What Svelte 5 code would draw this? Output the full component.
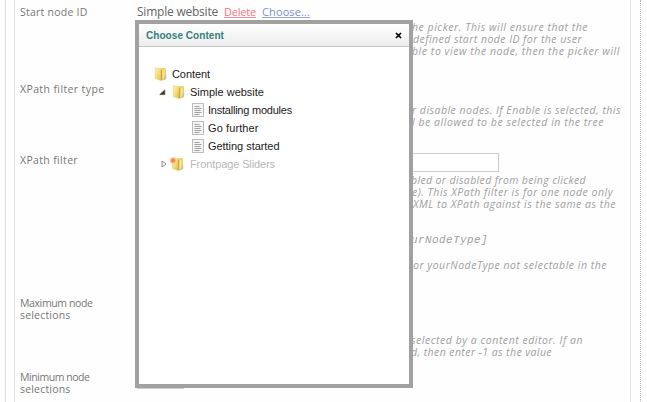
<script>
  // Spreads the letters of a line so that it fills the given width.
  function fit(node, width) {
    const natural = node.getBoundingClientRect().width;
    const count = node.textContent.length;
    node.style.letterSpacing = `${(width - natural) / count}px`;
  }

  // Each help line: text, indent from the help column, width, optional style.
  const rows = [
    {
      height: 77,
      label: [['Start node ID', 67.5]],
      picker: true,
      help: [
        ['he picker. This will ensure that the', 1, 176],
        ['defined start node ID for the user', 2, 169],
        ['ble to view the node, then the picker will', 1, 208]
      ]
    },
    {
      height: 71,
      label: [['XPath filter type', 84.5]],
      offset: 21,
      help: [
        ['r disable nodes. If Enable is selected, this', 1, 209],
        ['l be allowed to be selected in the tree', 1, 192]
      ]
    },
    {
      height: 143,
      label: [['XPath filter', 58]],
      input: true,
      help: [
        ['bled or disabled from being clicked', 0, 175],
        ['e). This XPath filter is for one node only', 1, 201],
        ['XML to XPath against is the same as the', 2, 203],
        null,
        null,
        ['urNodeType]', 0, 77, 'code'],
        null,
        ['or yourNodeType not selectable in the', 2, 194, 'low']
      ]
    },
    {
      height: 74,
      label: [['Maximum node', 72.5], ['selections', 50.5]],
      offset: 37,
      help: [
        ['selected by a content editor. If an', 0, 172],
        ['d, then enter -1 as the value', 0, 141]
      ]
    },
    {
      height: 31,
      label: [['Minimum node', 69.5], ['selections', 50.5]],
      small: true,
      help: []
    }
  ];

  const nodes = [
    { text: 'Content', width: 38, level: 0, icon: 'folder' },
    { text: 'Simple website', width: 74, level: 1, icon: 'folder', arrow: 'open' },
    { text: 'Installing modules', width: 84, level: 2, icon: 'doc' },
    { text: 'Go further', width: 50.5, level: 2, icon: 'doc' },
    { text: 'Getting started', width: 71.5, level: 2, icon: 'doc' },
    { text: 'Frontpage Sliders', width: 85, level: 1, icon: 'folder', arrow: 'closed', dim: true }
  ];
</script>

<div class="page">
  <div class="outer">
    <div class="panel">
      {#each rows as row}
        <div class="row" style:height="{row.height}px">
          <div class="label">
            {#each row.label as [text, width]}
              <div class="line"><span use:fit={width}>{text}</span></div>
            {/each}
          </div>
          <div class="field">
            {#if row.picker}
              <div class="picked">
                <span use:fit={81}>Simple website</span>
                <a class="delete" href="#delete"><span use:fit={32}>Delete</span></a>
                <a href="#choose"><span use:fit={48}>Choose...</span></a>
              </div>
            {/if}
            {#if row.input}<div class="input"></div>{/if}
            {#if row.small}<div class="input small"></div>{/if}
            <div class="help" style:padding-top="{row.offset ?? 0}px">
              {#each row.help as line}
                <div class="line {line?.[3] ?? ''}">
                  {#if line}
                    <span style:margin-left="{line[1]}px" use:fit={line[2]}>{line[0]}</span>
                  {/if}
                </div>
              {/each}
            </div>
          </div>
        </div>
      {/each}
    </div>
  </div>

  <div class="dialog">
    <div class="head">
      <span use:fit={78}>Choose Content</span>
      <svg width="7" height="7" viewBox="0 0 7 7"><path d="M1 1L6 6M6 1L1 6" stroke="#000" stroke-width="1.7" /></svg>
    </div>
    <div class="tree">
      {#each nodes as n}
        <div class="node" class:dim={n.dim} style:padding-left="{n.level * 18}px">
          <div class="arrow">
            {#if n.arrow === 'open'}
              <svg width="7" height="7" viewBox="0 0 7 7"><path d="M5.8 .9V5.6H.8Z" fill="#333" stroke="#555" stroke-width=".8" /></svg>
            {:else if n.arrow === 'closed'}
              <svg class="shut" width="6" height="8" viewBox="0 0 6 8"><path d="M1 1L5 4L1 7Z" fill="#fff" stroke="#888" stroke-width="1" /></svg>
            {/if}
          </div>
          {#if n.icon === 'folder'}
            <svg class="icon" width="16" height="16" viewBox="0 0 16 16">
              <defs>
                <linearGradient id="gold" x1="0" y1="0" x2="1" y2="1">
                  <stop offset="0" stop-color="#fff3b0" />
                  <stop offset=".55" stop-color="#f3dc72" />
                  <stop offset="1" stop-color="#d9b848" />
                </linearGradient>
              </defs>
              <path d="M7.5 2.5L12 2L13 3V12.5L10 14.5H7Z" fill="#e8cc60" />
              <path d="M2.3 1.8L8 2.8V14.5L2.3 12.5Z" fill="url(#gold)" stroke="#e6d078" stroke-width=".6" />
              <path d="M9.5 4L12 3V11.5L9.5 13Z" fill="#f5e38c" />
              <path d="M8.5 4V14" stroke="#c9a440" stroke-width="1" />
              <path d="M11.5 9.5L13.2 8.8V13L11.2 14Z" fill="#b9c6a8" />
              {#if n.dim}
                <circle cx="3" cy="4.5" r="2.9" fill="#f8ad80" />
                <circle cx="3" cy="4.5" r="1.5" fill="#f5793f" />
              {/if}
            </svg>
          {:else}
            <svg class="icon doc" width="16" height="16" viewBox="0 0 16 16">
              <rect x="2.5" y="1.5" width="11" height="13" fill="#f5f5f5" stroke="#bdbdbd" />
              <path d="M4.5 4.5H9.5M4.5 6.5H11.5M4.5 8.5H10.5M4.5 10.5H11.5M4.5 12.5H9.5" stroke="#a2a2a2" />
            </svg>
          {/if}
          <span class="name" use:fit={n.width}>{n.text}</span>
        </div>
      {/each}
    </div>
  </div>
</div>

<style>
  :global(body) {
    margin: 0;
    background: #fefefe;
  }
  .page {
    position: relative;
    box-sizing: border-box;
    width: 647px;
    height: 402px;
    padding-left: 5px;
    overflow: hidden;
    font-family: 'Open Sans', 'Noto Sans', sans-serif;
    font-size: 11px;
    line-height: 12px;
    color: #777;
    white-space: nowrap;
  }
  .outer {
    box-sizing: border-box;
    width: 636px;
    height: 402px;
    padding: 0 9px 0 8px;
    border-left: 1px solid #ddd;
    border-right: 1px dotted #bbb;
  }
  .panel {
    box-sizing: border-box;
    height: 402px;
    padding: 6px 0 0 5px;
    border-left: 1px solid #e2e2e2;
    border-right: 1px solid #e4e4e4;
  }
  .row {
    display: flex;
  }
  .label {
    flex: none;
    width: 117px;
    font-size: 10.5px;
  }
  .picked {
    display: flex;
    height: 15px;
    font-size: 12px;
    color: #666;
  }
  a {
    height: 11px;
    margin-left: 6px;
    font-size: 11px;
    color: #7b91cf;
    text-decoration: none;
    border-bottom: 1px solid #93a5d9;
  }
  a.delete {
    margin-left: 6px;
    color: #f7747c;
    border-color: #f78c92;
  }
  .input {
    box-sizing: border-box;
    width: 362px;
    height: 19px;
    margin: -1px 0 2px;
    border: 1px solid #ccc;
    background: #fff;
  }
  .input.small {
    width: 47px;
    border-color: #ccc;
  }
  .help {
    margin-left: 274px;
    font-size: 10.5px;
    font-style: italic;
    color: #a0a0a0;
  }
  .line {
    display: flex;
    height: 12px;
  }
  .line span {
    display: block;
    height: 12px;
  }
  .low {
    padding-top: 1px;
  }
  .code {
    font: italic 11px/12px 'Liberation Mono', monospace;
  }
  .dialog {
    position: absolute;
    left: 135px;
    top: 20px;
    box-sizing: border-box;
    width: 278px;
    height: 368px;
    border: 4px solid #a1a1a1;
    background: #fff;
    font-family: 'Liberation Sans', Arial, sans-serif;
  }
  .head {
    display: flex;
    align-items: center;
    justify-content: space-between;
    box-sizing: border-box;
    height: 23px;
    padding: 1px 7px 0;
    border-bottom: 1px solid #c4c4c4;
    background: linear-gradient(#fff, #ececec);
    font-size: 10px;
    font-weight: bold;
    color: #34807d;
  }
  .tree {
    padding-top: 18px;
  }
  .node {
    display: flex;
    align-items: center;
    height: 18px;
    font-size: 11px;
    color: #222;
  }
  .node.dim {
    color: #b8b8b8;
  }
  .arrow {
    display: flex;
    flex: none;
    width: 14px;
  }
  .arrow svg {
    margin-left: 2px;
  }
  .arrow .shut {
    margin-left: 4px;
  }
  .icon {
    flex: none;
    margin-right: 3px;
  }
  .icon.doc {
    margin-left: 1px;
    margin-right: 2px;
  }
  .node.dim .icon {
    overflow: visible;
    margin-left: -1px;
    margin-right: 4px;
  }
</style>
